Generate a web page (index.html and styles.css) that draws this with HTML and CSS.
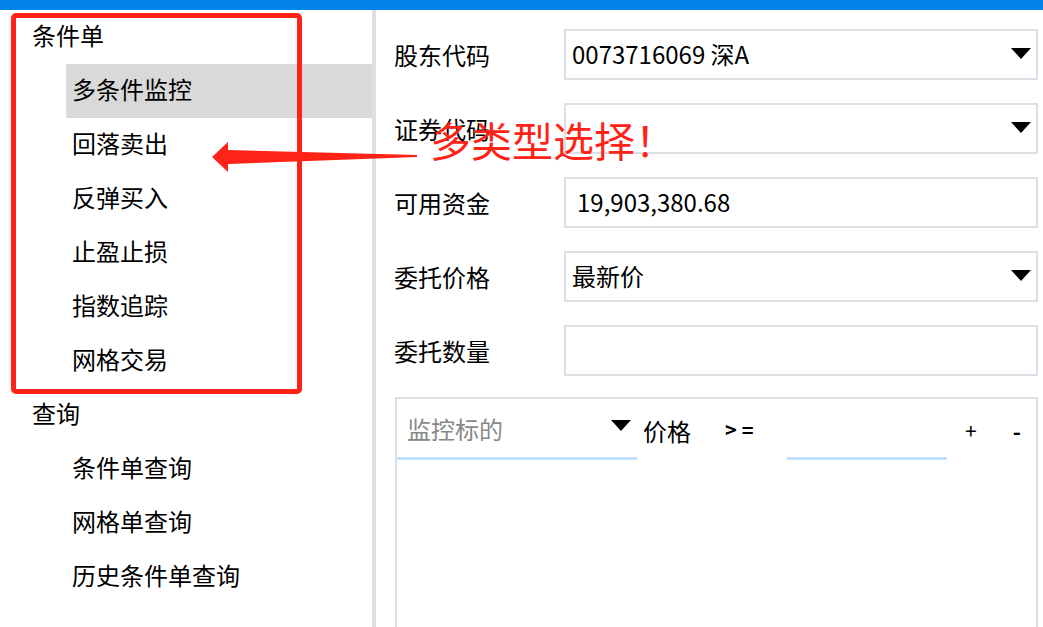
FILE: index.html
```html
<!DOCTYPE html>
<html lang="zh-CN">
<head>
  <meta charset="UTF-8">
  <title>条件单</title>
  <link rel="stylesheet" href="styles.css">
</head>
<body>
  <div class="topbar"></div>
  <div class="main">
    <div class="sidebar">
      <div class="group">条件单</div>
      <div class="item active">多条件监控</div>
      <div class="item">回落卖出</div>
      <div class="item">反弹买入</div>
      <div class="item">止盈止损</div>
      <div class="item">指数追踪</div>
      <div class="item">网格交易</div>
      <div class="group">查询</div>
      <div class="item">条件单查询</div>
      <div class="item">网格单查询</div>
      <div class="item">历史条件单查询</div>
    </div>
    <div class="content">
      <div class="form-row">
        <label>股东代码</label>
        <div class="box select">0073716069 深A<span class="caret"></span></div>
      </div>
      <div class="form-row">
        <label>证券代码</label>
        <div class="box select"><span class="caret"></span></div>
      </div>
      <div class="form-row">
        <label>可用资金</label>
        <div class="box money">19,903,380.68</div>
      </div>
      <div class="form-row">
        <label>委托价格</label>
        <div class="box select">最新价<span class="caret"></span></div>
      </div>
      <div class="form-row">
        <label>委托数量</label>
        <div class="box"></div>
      </div>
      <div class="panel">
        <div class="cond">
          <div class="cond-select">监控标的<span class="caret"></span></div>
          <span class="cond-label">价格</span>
          <span class="cond-op">&gt;=</span>
          <div class="cond-input"></div>
          <span class="cond-btn">+</span>
          <span class="cond-btn minus">-</span>
        </div>
      </div>
    </div>
  </div>

  <!-- annotation layer -->
  <div class="mark-box"></div>
  <svg class="mark-arrow" width="220" height="40" viewBox="0 0 220 40">
    <polygon points="0,16 16,1 16,9 205,14 205,16 16,23 16,31" fill="#ff2217"/>
  </svg>
  <div class="mark-text">多类型选择！</div>
</body>
</html>
```

FILE: styles.css
```css
body {
  margin: 0;
  width: 1043px;
  height: 627px;
  overflow: hidden;
  background: #fff;
  color: #000;
  font-family: "Noto Sans CJK SC", "Noto Sans", sans-serif;
  font-size: 24px;
  position: relative;
}
.topbar {
  height: 10px;
  background: #0284e8;
}
.main {
  display: flex;
  height: 617px;
}
.sidebar {
  width: 372px;
  border-right: 4px solid #dcdfe6;
}
.group,
.item {
  height: 54px;
  line-height: 50px;
  white-space: nowrap;
}
.group {
  padding-left: 32px;
}
.item {
  margin-left: 66px;
  padding-left: 6px;
}
.item.active {
  background: #d9d9d9;
}
.content {
  flex: 1;
  padding: 19px 5px 0 18px;
}
.form-row {
  display: flex;
  align-items: center;
  height: 51px;
  margin-bottom: 23px;
}
.form-row label {
  width: 170px;
  flex-shrink: 0;
}
.box {
  flex: 1;
  height: 51px;
  box-sizing: border-box;
  border: 2px solid #dcdfe6;
  display: flex;
  align-items: center;
  padding-left: 6px;
  padding-bottom: 2px;
}
.money {
  padding-left: 11px;
}
.caret {
  width: 0;
  height: 0;
  border-left: 10px solid transparent;
  border-right: 10px solid transparent;
  border-top: 11px solid #000;
  margin-left: auto;
  margin-right: 5px;
}
.panel {
  margin-top: -2px;
  margin-left: 1px;
  height: 240px;
  border: 2px solid #dcdfe6;
  border-bottom: none;
}
.cond {
  display: flex;
  align-items: center;
  height: 61px;
  white-space: nowrap;
}
.cond > * {
  flex-shrink: 0;
}
.cond-select {
  width: 240px;
  height: 61px;
  box-sizing: border-box;
  border-bottom: 3px solid #c2e0fb;
  display: flex;
  align-items: center;
  padding-left: 10px;
  color: #888;
}
.cond-select .caret {
  margin-right: 6px;
  margin-bottom: 6px;
}
.cond-label {
  margin-left: 6px;
  width: 48px;
  padding-top: 2px;
}
.cond-op {
  font-size: 20px;
  font-weight: bold;
  margin-left: 34px;
  width: 32px;
  letter-spacing: 5px;
}
.cond-input {
  width: 160px;
  height: 61px;
  box-sizing: border-box;
  border-bottom: 3px solid #c2e0fb;
  margin-left: 30px;
  align-self: flex-start;
}
.cond-btn {
  font-size: 21px;
  margin-left: 18px;
}
.cond-btn.minus {
  font-size: 22px;
  font-weight: bold;
  margin-left: 36px;
}
.mark-box {
  position: absolute;
  left: 11px;
  top: 13px;
  width: 281px;
  height: 371px;
  border: 5px solid #ff2217;
  border-radius: 5px;
}
.mark-arrow {
  position: absolute;
  left: 212px;
  top: 141px;
}
.mark-text {
  position: absolute;
  left: 430px;
  top: 111px;
  font-size: 41px;
  line-height: 56px;
  color: #ff2217;
  white-space: nowrap;
}
```
